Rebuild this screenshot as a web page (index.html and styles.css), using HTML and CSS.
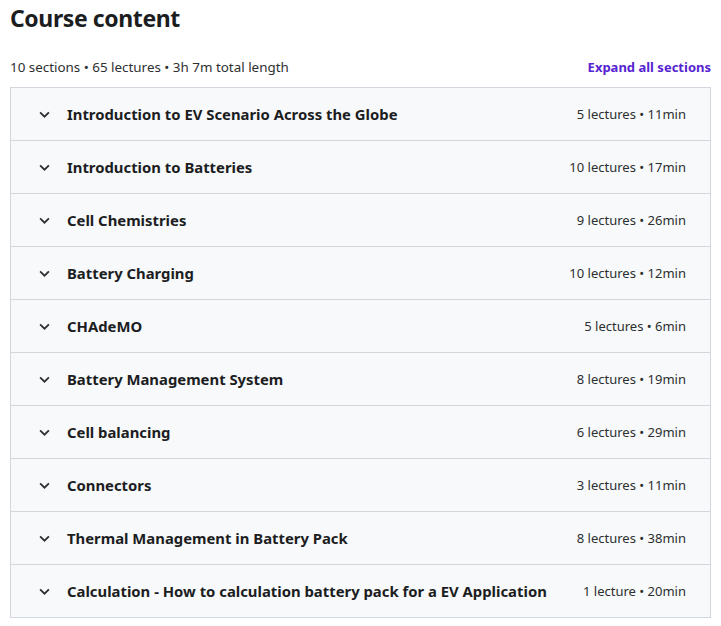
FILE: index.html
```html
<!DOCTYPE html>
<html lang="en">
<head>
    <meta charset="UTF-8">
    <meta name="viewport" content="width=device-width, initial-scale=1.0">
    <title>Course content</title>
    <link rel="stylesheet" href="styles.css">
</head>
<body>
    <div class="course">
        <h2 class="title">Course content</h2>
        <div class="summary">
            <span>10 sections • 65 lectures • 3h 7m total length</span>
            <a class="expand" href="#">Expand all sections</a>
        </div>
        <div class="sections">
            <div class="section">
                <svg class="chev" viewBox="0 0 10 6"><polyline points="1,1 5,5 9,1"/></svg>
                <span class="name">Introduction to EV Scenario Across the Globe</span>
                <span class="meta">5 lectures • 11min</span>
            </div>
            <div class="section">
                <svg class="chev" viewBox="0 0 10 6"><polyline points="1,1 5,5 9,1"/></svg>
                <span class="name">Introduction to Batteries</span>
                <span class="meta">10 lectures • 17min</span>
            </div>
            <div class="section">
                <svg class="chev" viewBox="0 0 10 6"><polyline points="1,1 5,5 9,1"/></svg>
                <span class="name">Cell Chemistries</span>
                <span class="meta">9 lectures • 26min</span>
            </div>
            <div class="section">
                <svg class="chev" viewBox="0 0 10 6"><polyline points="1,1 5,5 9,1"/></svg>
                <span class="name">Battery Charging</span>
                <span class="meta">10 lectures • 12min</span>
            </div>
            <div class="section">
                <svg class="chev" viewBox="0 0 10 6"><polyline points="1,1 5,5 9,1"/></svg>
                <span class="name">CHAdeMO</span>
                <span class="meta">5 lectures • 6min</span>
            </div>
            <div class="section">
                <svg class="chev" viewBox="0 0 10 6"><polyline points="1,1 5,5 9,1"/></svg>
                <span class="name">Battery Management System</span>
                <span class="meta">8 lectures • 19min</span>
            </div>
            <div class="section">
                <svg class="chev" viewBox="0 0 10 6"><polyline points="1,1 5,5 9,1"/></svg>
                <span class="name">Cell balancing</span>
                <span class="meta">6 lectures • 29min</span>
            </div>
            <div class="section">
                <svg class="chev" viewBox="0 0 10 6"><polyline points="1,1 5,5 9,1"/></svg>
                <span class="name">Connectors</span>
                <span class="meta">3 lectures • 11min</span>
            </div>
            <div class="section">
                <svg class="chev" viewBox="0 0 10 6"><polyline points="1,1 5,5 9,1"/></svg>
                <span class="name">Thermal Management in Battery Pack</span>
                <span class="meta">8 lectures • 38min</span>
            </div>
            <div class="section">
                <svg class="chev" viewBox="0 0 10 6"><polyline points="1,1 5,5 9,1"/></svg>
                <span class="name">Calculation - How to calculation battery pack for a EV Application</span>
                <span class="meta">1 lecture • 20min</span>
            </div>
        </div>
    </div>
</body>
</html>
```

FILE: styles.css
```css
body {
    font-family: "Noto Sans", "Open Sans", sans-serif;
    color: #2d2f31;
    background-color: #fff;
    margin: 0;
    padding: 0;
}
.course {
    padding: 0 10px;
}
.title {
    font-size: 23px;
    font-weight: 700;
    color: #1c1d1f;
    margin: 1px 0 0;
    line-height: 34px;
    letter-spacing: -0.4px;
}
.summary {
    display: flex;
    justify-content: space-between;
    align-items: center;
    font-size: 13.4px;
    margin-top: 21px;
    height: 22px;
    margin-bottom: 9px;
}
.expand {
    color: #5624d0;
    font-weight: 700;
    text-decoration: none;
    font-size: 13px;
}
.sections {
    border: 1px solid #d1d7dc;
    border-bottom: none;
}
.section {
    display: flex;
    align-items: center;
    height: 52px;
    background-color: #f7f9fa;
    border-bottom: 1px solid #d1d7dc;
    padding: 0 24px 0 28px;
}
.chev {
    width: 11px;
    height: 7px;
    fill: none;
    stroke: #2d2f31;
    stroke-width: 1.6;
    margin-right: 17px;
    flex-shrink: 0;
}
.name {
    flex: 1;
    font-weight: 700;
    font-size: 14.85px;
    color: #1c1d1f;
}
.meta {
    font-size: 13px;
    white-space: nowrap;
    margin-left: 16px;
}
```
